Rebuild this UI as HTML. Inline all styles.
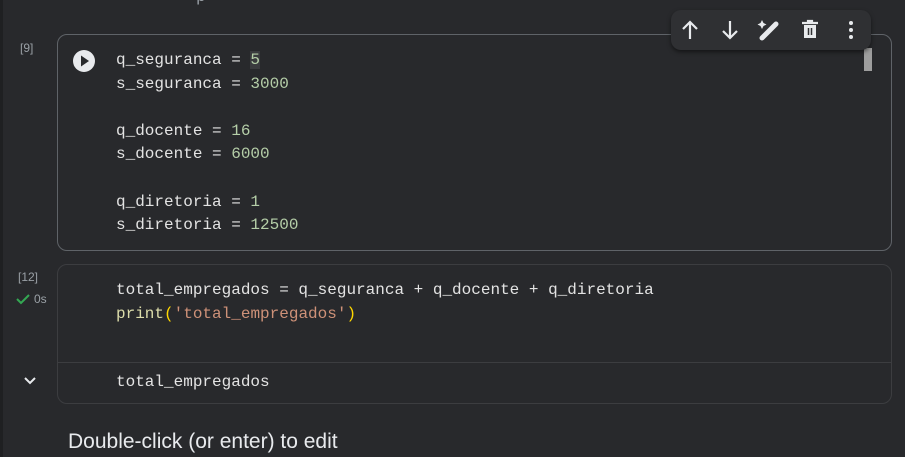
<!DOCTYPE html><html><head><style>
body{margin:0;width:905px;height:457px;background:#28292c;position:relative;overflow:hidden;font-family:"Liberation Mono",monospace;}
.stripe{position:absolute;left:0;top:0;width:3px;height:457px;background:#1f2022}
.cell{position:absolute;left:57px;width:833px;border:1px solid #5f6368;border-radius:10px;}
.code{position:absolute;left:116px;font-size:16px;line-height:23.6px;color:#e3e3e3;white-space:pre}
.n{color:#b5cea8}.s{color:#ce9178}.f{color:#dcdcaa}.p{color:#ffd700}
.lbl{position:absolute;font:12px "Liberation Sans",sans-serif;color:#9aa0a6}
</style></head><body>
<div class="stripe"></div>
<div style="position:absolute;left:155px;top:-12px;color:#9aa0a6;font:16px 'Liberation Sans',sans-serif;letter-spacing:2px">· · · p · · · · · · · · · · · · · · · · · · · · · ·</div>
<div class="lbl" style="left:20px;top:41px">[9]</div>
<div class="cell" style="top:34px;height:215px"></div>
<svg style="position:absolute;left:72px;top:49px" width="24" height="24"><circle cx="12" cy="12" r="11" fill="#e8eaed"/><path d="M9 6.5L17 12L9 17.5Z" fill="#28292c"/></svg>
<div class="code" style="top:49px">q_seguranca = <span class="n" style="background:#3a3b3e">5</span>
s_seguranca = <span class="n">3000</span>

q_docente = <span class="n">16</span>
s_docente = <span class="n">6000</span>

q_diretoria = <span class="n">1</span>
s_diretoria = <span class="n">12500</span></div>
<div style="position:absolute;left:864px;top:48px;width:8px;height:23px;background:#9e9e9e"></div>
<div style="position:absolute;left:671px;top:10px;width:200px;height:40px;background:#2f3033;border-radius:10px;box-shadow:0 2px 4px rgba(0,0,0,.5)"></div>
<svg style="position:absolute;left:671px;top:10px" width="200" height="40" fill="none" stroke="#e8eaed" stroke-width="2.2">
<path d="M19 29V12M12 19l7-7 7 7"/><path d="M59 11v17M52 21l7 7 7-7"/>
<path d="M91 28l14-14" stroke-width="5" stroke-linecap="round"/><path d="M91 10l1.5 3 3 1.5-3 1.5-1.5 3-1.5-3-3-1.5 3-1.5z" fill="#e8eaed" stroke="none"/>
<path d="M131 13h16M137 13v-2h4v2" /><path d="M133 15h12v13h-12z" fill="#e8eaed" stroke="none"/><path d="M137.5 18v7M140.5 18v7" stroke="#2f3033" stroke-width="1.5"/>
<circle cx="180" cy="13" r="2" fill="#e8eaed" stroke="none"/><circle cx="180" cy="20" r="2" fill="#e8eaed" stroke="none"/><circle cx="180" cy="27" r="2" fill="#e8eaed" stroke="none"/>
</svg>
<div class="lbl" style="left:18px;top:270px">[12]</div>
<svg style="position:absolute;left:15px;top:292px" width="16" height="14"><path d="M2 7l4 4 8-8" fill="none" stroke="#34a853" stroke-width="2"/></svg>
<div class="lbl" style="left:34px;top:292px">0s</div>
<div class="cell" style="top:264px;height:138px;border-color:#3c3d40"></div>
<div style="position:absolute;left:58px;top:362px;width:833px;height:1px;background:#3c3d40"></div>
<div class="code" style="top:279px">total_empregados = q_seguranca + q_docente + q_diretoria
<span class="f">print</span><span class="p">(</span><span class="s">'total_empregados'</span><span class="p">)</span></div>
<svg style="position:absolute;left:22px;top:375px" width="16" height="12"><path d="M3 3l5 5 5-5" fill="none" stroke="#e8eaed" stroke-width="2"/></svg>
<div class="code" style="top:371px">total_empregados</div>
<div style="position:absolute;left:68px;top:430px;font:21px 'Liberation Sans',sans-serif;color:#e8eaed">Double-click (or enter) to edit</div>
</body></html>
